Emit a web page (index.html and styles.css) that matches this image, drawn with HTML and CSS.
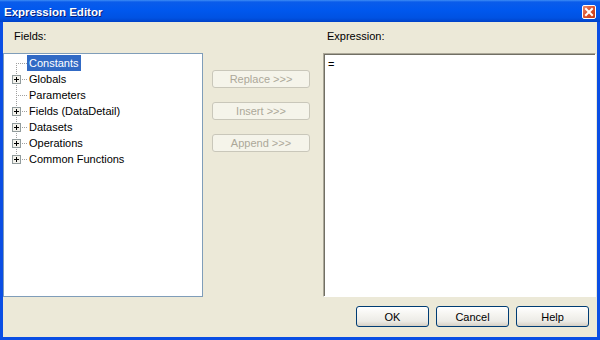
FILE: index.html
```html
<!DOCTYPE html>
<html lang="en">
<head>
    <meta charset="UTF-8">
    <title>Expression Editor</title>
    <link rel="stylesheet" href="styles.css">
</head>
<body>
    <div class="window">
        <!-- barra de titulo -->
        <div class="titlebar">
            <span class="title">Expression Editor</span>
            <span class="close-btn">
                <svg width="14" height="14" viewBox="0 0 14 14">
                    <path d="M4 4L10 10M10 4L4 10" stroke="#fff" stroke-width="2" stroke-linecap="square"/>
                </svg>
            </span>
        </div>

        <div class="client">
            <div class="main">
                <div class="label">Fields:</div>
                <div></div>
                <div class="label label-expr">Expression:</div>

                <!-- arbol de campos -->
                <div class="tree">
                    <div class="row first">
                        <span class="conn"></span>
                        <span class="text selected">Constants</span>
                    </div>
                    <div class="row">
                        <span class="conn"><span class="plus"><svg width="9" height="9" viewBox="0 0 9 9"><rect x="0.5" y="0.5" width="8" height="8" fill="#f3f2ec" stroke="#919b9c"/><path d="M2 4.5h5M4.5 2v5" stroke="#000"/></svg></span></span>
                        <span class="text">Globals</span>
                    </div>
                    <div class="row">
                        <span class="conn"></span>
                        <span class="text">Parameters</span>
                    </div>
                    <div class="row">
                        <span class="conn"><span class="plus"><svg width="9" height="9" viewBox="0 0 9 9"><rect x="0.5" y="0.5" width="8" height="8" fill="#f3f2ec" stroke="#919b9c"/><path d="M2 4.5h5M4.5 2v5" stroke="#000"/></svg></span></span>
                        <span class="text">Fields (DataDetail)</span>
                    </div>
                    <div class="row">
                        <span class="conn"><span class="plus"><svg width="9" height="9" viewBox="0 0 9 9"><rect x="0.5" y="0.5" width="8" height="8" fill="#f3f2ec" stroke="#919b9c"/><path d="M2 4.5h5M4.5 2v5" stroke="#000"/></svg></span></span>
                        <span class="text">Datasets</span>
                    </div>
                    <div class="row">
                        <span class="conn"><span class="plus"><svg width="9" height="9" viewBox="0 0 9 9"><rect x="0.5" y="0.5" width="8" height="8" fill="#f3f2ec" stroke="#919b9c"/><path d="M2 4.5h5M4.5 2v5" stroke="#000"/></svg></span></span>
                        <span class="text">Operations</span>
                    </div>
                    <div class="row last">
                        <span class="conn"><span class="plus"><svg width="9" height="9" viewBox="0 0 9 9"><rect x="0.5" y="0.5" width="8" height="8" fill="#f3f2ec" stroke="#919b9c"/><path d="M2 4.5h5M4.5 2v5" stroke="#000"/></svg></span></span>
                        <span class="text">Common Functions</span>
                    </div>
                </div>

                <!-- botones del medio -->
                <div class="actions">
                    <button class="btn small" disabled>Replace &gt;&gt;&gt;</button>
                    <button class="btn small" disabled>Insert &gt;&gt;&gt;</button>
                    <button class="btn small" disabled>Append &gt;&gt;&gt;</button>
                </div>

                <div class="expr">=</div>
            </div>

            <div class="footer">
                <button class="btn">OK</button>
                <button class="btn">Cancel</button>
                <button class="btn">Help</button>
            </div>
        </div>
    </div>
</body>
</html>
```

FILE: styles.css
```css
html, body {
    margin: 0;
    padding: 0;
}

body {
    font-family: "Liberation Sans", Arial, sans-serif;
    font-size: 11px;
    color: #000;
}

.window {
    width: 600px;
    height: 340px;
    display: flex;
    flex-direction: column;
    background: #0a4ee4;
}

/* barra de titulo estilo XP */
.titlebar {
    height: 22px;
    flex: none;
    display: flex;
    align-items: center;
    justify-content: space-between;
    padding: 1px 4px 0 4px;
    box-sizing: border-box;
    background: linear-gradient(to bottom, #3d8df5 0, #0a5cea 2px, #0058ee 10px, #0052e2 18px, #0041c8 22px);
}

.title {
    color: #fff;
    font-weight: bold;
    font-size: 11.5px;
    text-shadow: 1px 1px #0a1f7a;
}

.close-btn {
    width: 14px;
    height: 14px;
    box-sizing: border-box;
    display: flex;
    border: 1px solid #fff;
    border-radius: 2px;
    background: linear-gradient(135deg, #e98a6f 0, #d9512c 50%, #c23a16 100%);
}

.close-btn svg {
    margin: -1px;
}

.client {
    flex: 1;
    display: flex;
    flex-direction: column;
    background: #ece9d8;
    margin: 0 3px 3px 3px;
}

.main {
    display: grid;
    grid-template-columns: 200px 120px 273px;
    grid-template-rows: 31px 244px;
}

.label {
    padding: 8px 0 0 11px;
}

.label-expr {
    padding-left: 4px;
}

/* arbol */
.tree {
    background: #fff;
    border: 1px solid #7f9db9;
    padding-top: 1px;
}

.row {
    display: flex;
    height: 16px;
    align-items: center;
}

.conn {
    width: 23px;
    height: 16px;
    flex: none;
    display: flex;
    background-image:
        repeating-linear-gradient(to bottom, #a0a0a0 0 1px, transparent 1px 2px),
        repeating-linear-gradient(to right, #a0a0a0 0 1px, transparent 1px 2px);
    background-size: 1px 16px, 11px 1px;
    background-position: 12px 0, 12px 8px;
    background-repeat: no-repeat;
}

.row.first .conn {
    background-size: 1px 8px, 11px 1px;
    background-position: 12px 8px, 12px 8px;
}

.row.last .conn {
    background-size: 1px 8px, 11px 1px;
    background-position: 12px 0, 12px 8px;
}

.plus {
    display: flex;
    margin: 4px 0 0 8px;
    width: 9px;
    height: 9px;
}

.text {
    padding: 1px 2px;
    line-height: 14px;
    white-space: nowrap;
}

.selected {
    background: #316ac5;
    color: #fff;
}

/* botones */
.actions {
    display: flex;
    flex-direction: column;
    gap: 14px;
    padding: 17px 0 0 9px;
}

.btn {
    font-family: "Liberation Sans", Arial, sans-serif;
    font-size: 11px;
    color: #000;
    width: 73px;
    height: 21px;
    padding: 0;
    border: 1px solid #003c74;
    border-radius: 3px;
    background: linear-gradient(to bottom, #ffffff 0, #f5f4f0 40%, #ecebe6 75%, #d6d0c5 100%);
}

.btn.small {
    width: 98px;
    height: 18px;
}

.btn:disabled {
    color: #aca899;
    border-color: #c9c7ba;
    background: #f5f4ea;
}

.expr {
    background: #fff;
    border-top: 1px solid #aca899;
    border-left: 1px solid #aca899;
    border-right: 1px solid #fff;
    border-bottom: 1px solid #fff;
    box-shadow: inset 1px 1px #716f64;
    padding: 4px 4px;
    font-size: 11px;
}

.footer {
    display: flex;
    justify-content: flex-end;
    gap: 7px;
    padding: 9px 8px 0 0;
}
```
